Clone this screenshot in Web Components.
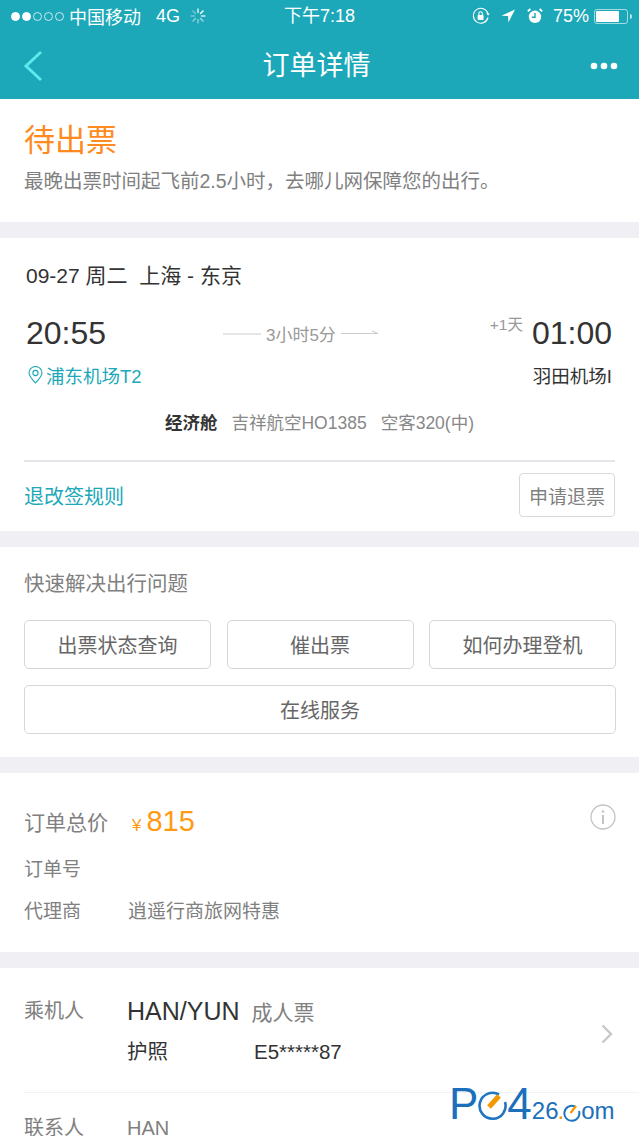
<!DOCTYPE html>
<html lang="zh">
<head>
<meta charset="utf-8">
<title>订单详情</title>
<style>
  html, body { margin: 0; padding: 0; }
  body {
    width: 639px; height: 1136px; overflow: hidden; position: relative;
    background: #efeff4; color: #333;
    font-family: "Liberation Sans", "Noto Sans CJK SC", sans-serif;
  }
  order-status, flight-card, quick-help, order-summary { margin-bottom: 16px; }
</style>
</head>
<body>
  <app-header></app-header>
  <order-status></order-status>
  <flight-card></flight-card>
  <quick-help></quick-help>
  <order-summary></order-summary>
  <passenger-card></passenger-card>
  <site-mark></site-mark>

<script>
const define = (name, html) => customElements.define(name, class extends HTMLElement {
  constructor() {
    super();
    this.attachShadow({ mode: 'open' }).innerHTML = html;
  }
});

define('app-header', `
  <style>
    :host { display: block; height: 99px; background: #1ca8b9; color: #fff; }
    .status { height: 32px; display: flex; align-items: center; padding: 0 7px 0 11px; position: relative; font-size: 18px; }
    .dots { display: flex; gap: 2px; margin-right: 5px; }
    .dots i { width: 9px; height: 9px; box-sizing: border-box; border-radius: 50%; border: 1px solid #fff; opacity: .75; }
    .dots i.on { background: #fff; opacity: 1; }
    .net { margin-left: 15px; }
    .spin { margin-left: 10px; }
    .time { position: absolute; left: 0; right: 0; text-align: center; top: 5px; line-height: 22px; }
    .right { margin-left: auto; display: flex; align-items: center; }
    .pct { margin: 0 5px 0 10px; }
    .battery { width: 34px; height: 15px; box-sizing: border-box; border: 1px solid rgba(255,255,255,.6); border-radius: 3px; padding: 1px; }
    .battery b { display: block; width: 75%; height: 100%; background: #fff; border-radius: 1px; }
    .nub { width: 2px; height: 5px; margin-left: 2px; background: rgba(255,255,255,.7); border-radius: 0 2px 2px 0; }
    .nav { height: 67px; display: flex; align-items: center; justify-content: space-between; padding: 0 21px 4px 23px; }
    .nav h1 { margin: 0; font-size: 27px; font-weight: 400; line-height: 38px; }
    svg { display: block; }
  </style>
  <div class="status">
    <div class="dots"><i class="on"></i><i class="on"></i><i></i><i></i><i></i></div>
    <span>中国移动</span><span class="net">4G</span>
    <svg class="spin" width="16" height="16" viewBox="0 0 16 16" stroke="#fff" stroke-width="1.4" stroke-linecap="round">
      <path d="M8 1v3.5" opacity=".9"/><path d="M13 3l-2.5 2.5"/><path d="M15 8h-3.5" opacity=".8"/><path d="M13 13l-2.5-2.5" opacity=".6"/>
      <path d="M8 15v-3.5" opacity=".5"/><path d="M3 13l2.5-2.5" opacity=".5"/><path d="M1 8h3.5" opacity=".4"/><path d="M3 3l2.5 2.5" opacity=".4"/>
    </svg>
    <span class="time">下午7:18</span>
    <div class="right">
      <svg width="18" height="18" viewBox="0 0 18 18" fill="none" stroke="#fff" stroke-width="1.1">
        <path d="M16 10.5A7.4 7.4 0 1 1 16 7"/><path d="M14.3 6.5l1.9 2 1.6-2z" fill="#fff" stroke="none"/>
        <rect x="5.6" y="8" width="6" height="5" rx=".8" fill="#fff" stroke="none"/><path d="M6.9 8V6.4a1.7 1.7 0 0 1 3.4 0V8"/>
      </svg>
      <svg style="margin-left:11px" width="14" height="14" viewBox="0 0 14 14"><path d="M14 0.5L0.5 6.8l6.6.2 .3 6.5z" fill="#fff"/></svg>
      <svg style="margin-left:12px" width="16" height="16" viewBox="0 0 16 16">
        <circle cx="8" cy="8.8" r="6.2" fill="#fff"/><path d="M8 5v4.2H4.8" fill="none" stroke="#1ca8b9" stroke-width="1.4"/>
        <path d="M.8 3.4L3.4 1M15.2 3.4L12.6 1" stroke="#fff" stroke-width="1.8"/>
      </svg>
      <span class="pct">75%</span>
      <div class="battery"><b></b></div><div class="nub"></div>
    </div>
  </div>
  <div class="nav">
    <svg width="20" height="32" viewBox="0 0 20 32" fill="none" stroke="#5fe8ee" stroke-width="3"><path d="M18 2L3 16l15 14"/></svg>
    <h1>订单详情</h1>
    <svg width="28" height="8" viewBox="0 0 28 8" fill="#fff"><circle cx="4" cy="4" r="3.3"/><circle cx="14" cy="4" r="3.3"/><circle cx="24" cy="4" r="3.3"/></svg>
  </div>
`);

define('order-status', `
  <style>
    :host { display: block; height: 123px; box-sizing: border-box; padding: 21px 24px 0; background: #fff; }
    h2 { margin: 0; font-size: 31px; font-weight: 400; line-height: 42px; color: #ff8a1e; }
    p { margin: 5px 0 0; font-size: 19.5px; line-height: 28px; color: #808080; white-space: nowrap; }
  </style>
  <h2>待出票</h2>
  <p>最晚出票时间起飞前2.5小时，去哪儿网保障您的出行。</p>
`);

define('flight-card', `
  <style>
    :host { display: block; height: 293px; box-sizing: border-box; padding: 23px 24px 0; background: #fff; }
    .title { padding-left: 2px; font-size: 21px; line-height: 30px; color: #333; white-space: nowrap; }
    .times { display: flex; align-items: center; justify-content: space-between; margin-top: 20px; height: 44px; padding: 0 3px 0 2px; }
    .clock { font-size: 32px; line-height: 44px; color: #333; }
    .span { display: flex; align-items: center; gap: 5px; font-size: 17px; color: #999; margin: 0 0 0 6px; }
    .span svg { display: block; }
    .arr { display: flex; align-items: center; gap: 9px; }
    .plus { font-size: 15.5px; line-height: 18px; color: #999; margin-bottom: 16px; }
    .ports { display: flex; justify-content: space-between; align-items: center; margin-top: 7px; height: 26px; padding: 0 3px 0 4px; font-size: 18.5px; }
    .dep { display: flex; align-items: center; gap: 3px; color: #1ca8b9; }
    .arrport { color: #333; }
    .meta { display: flex; justify-content: center; gap: 14px; margin-top: 22px; font-size: 17.5px; line-height: 26px; color: #888; padding-left: 0; }
    .meta b { font-weight: 700; color: #333; }
    .rule { height: 2px; background: #e4e6ea; margin-top: 24px; }
    .foot { display: flex; justify-content: space-between; align-items: center; margin-top: 11px; }
    .link { font-size: 20px; color: #1ca8b9; }
    .refund { height: 44px; width: 96px; box-sizing: border-box; border: 1px solid #d9d9d9; border-radius: 4px; display: flex; align-items: center; justify-content: center; font-size: 19px; color: #808080; }
  </style>
  <div class="title">09-27 周二&nbsp; 上海 - 东京</div>
  <div class="times">
    <span class="clock">20:55</span>
    <div class="span">
      <svg width="38" height="6" viewBox="0 0 38 6"><path d="M0 4h38" stroke="#ccc"/></svg>
      <span>3小时5分</span>
      <svg width="38" height="6" viewBox="0 0 38 6" fill="none"><path d="M0 3.5h37L31 1" stroke="#ccc"/></svg>
    </div>
    <div class="arr"><span class="plus">+1天</span><span class="clock">01:00</span></div>
  </div>
  <div class="ports">
    <span class="dep">
      <svg width="15" height="18" viewBox="0 0 15 18" fill="none" stroke="#1ca8b9" stroke-width="1.1"><path d="M7.5 17C3.5 12.6 1 10 1 7a6.5 6.5 0 0 1 13 0c0 3-2.5 5.600-6.500 10z"/><circle cx="7.500" cy="7" r="2.600"/></svg>
      浦东机场T2
    </span>
    <span class="arrport">羽田机场I</span>
  </div>
  <div class="meta"><b>经济舱</b><span>吉祥航空HO1385</span><span>空客320(中)</span></div>
  <div class="rule"></div>
  <div class="foot"><span class="link">退改签规则</span><span class="refund">申请退票</span></div>
`);

define('help-button', `
  <style>
    :host { display: flex; height: 49px; box-sizing: border-box; align-items: center; justify-content: center; border: 1px solid #d6d6d6; border-radius: 5px; font-size: 20px; color: #666; }
  </style>
  <slot></slot>
`);

define('quick-help', `
  <style>
    :host { display: block; height: 210px; box-sizing: border-box; padding: 22px 24px 0; background: #fff; }
    h3 { margin: 0; font-size: 20.5px; font-weight: 400; line-height: 30px; color: #808080; }
    .grid { display: grid; grid-template-columns: repeat(3, 187px); column-gap: 15.500px; row-gap: 16px; margin-top: 21px; }
    .wide { grid-column: 1 / -1; }
  </style>
  <h3>快速解决出行问题</h3>
  <div class="grid">
    <help-button>出票状态查询</help-button>
    <help-button>催出票</help-button>
    <help-button>如何办理登机</help-button>
    <help-button class="wide">在线服务</help-button>
  </div>
`);

define('order-summary', `
  <style>
    :host { display: block; height: 179px; box-sizing: border-box; padding: 30px 23px 0 24px; background: #fff; position: relative; }
    .row { display: grid; grid-template-columns: 104px 1fr; align-items: center; color: #808080; font-size: 19px; }
    .total { height: 36px; font-size: 21px; }
    .price { color: #ff9a14; font-size: 29px; display: flex; align-items: baseline; margin-left: 4px; }
    .price small { font-size: 17px; margin-right: 5px; }
    .no { height: 28px; margin-top: 14px; }
    .agent { height: 28px; margin-top: 14px; }
    .agent span { color: #808080; }
    svg { position: absolute; right: 23px; top: 31px; }
  </style>
  <div class="row total"><span>订单总价</span><span class="price"><small>¥</small>815</span></div>
  <div class="row no"><span>订单号</span><span></span></div>
  <div class="row agent"><span>代理商</span><span>逍遥行商旅网特惠</span></div>
  <svg width="26" height="26" viewBox="0 0 26 26" fill="none" stroke="#c4c4c4" stroke-width="1.300"><circle cx="13" cy="13" r="12"/><path d="M13 11v9" stroke-width="2"/><circle cx="13" cy="7.500" r="1.300" fill="#c4c4c4" stroke="none"/></svg>
`);

define('passenger-card', `
  <style>
    :host { display: block; height: 170px; box-sizing: border-box; padding: 28px 0 0 24px; background: #fff; position: relative; }
    .row { display: grid; grid-template-columns: 103px 1fr; color: #808080; font-size: 20px; line-height: 30px; }
    .name { color: #333; font-size: 25px; }
    .kind { color: #808080; font-size: 21px; margin-left: 12px; }
    .doc { display: flex; margin-top: 9px; color: #333; font-size: 20.500px; }
    .doc span:first-child { width: 127px; }
    .line { height: 1px; background: #f2f2f2; margin-top: 25px; }
    .chev { position: absolute; right: 26px; top: 56px; }
    .next { margin-top: 20px; }
  </style>
  <div class="row">
    <span>乘机人</span>
    <div>
      <div><span class="name">HAN/YUN</span><span class="kind">成人票</span></div>
      <div class="doc"><span>护照</span><span>E5*****87</span></div>
    </div>
  </div>
  <div class="line"></div>
  <div class="row next"><span>联系人</span><span>HAN</span></div>
  <svg class="chev" width="12" height="20" viewBox="0 0 12 20" fill="none" stroke="#c8c8c8" stroke-width="2.400"><path d="M1.500 1.500L10 10l-8.500 8.500"/></svg>
`);

define('site-mark', `
  <style>
    :host { position: absolute; left: 449px; top: 1082px; display: flex; align-items: baseline; font-family: "Liberation Sans", sans-serif; line-height: 1; color: #1b6fbb; }
    .big { font-size: 44px; font-weight: 400; }
    .mid { font-size: 24px; }
    .dot { color: #f39800; font-size: 24px; margin: 0 -1px; }
    svg { align-self: flex-end; display: block; }
  </style>
  <span class="big">P</span>
  <svg width="30" height="30" viewBox="0 0 30 30" fill="none" style="margin:0 -1px 5px 0"><path d="M21 3.500A13 13 0 1 0 27 11" stroke="#1f75c0" stroke-width="2.600"/><path d="M11 16L21 5" stroke="#f39800" stroke-width="5"/></svg>
  <span class="big">4</span>
  <span class="mid">26</span><span class="dot">.</span>
  <svg width="18" height="18" viewBox="0 0 18 18" fill="none" style="margin-bottom:4px"><path d="M12 2.500A7.500 7.500 0 1 0 16 7" stroke="#1f75c0" stroke-width="2"/><path d="M7.500 9L13 2" stroke="#f39800" stroke-width="2.200"/></svg>
  <span class="mid">om</span>
`);
</script>
</body>
</html>
